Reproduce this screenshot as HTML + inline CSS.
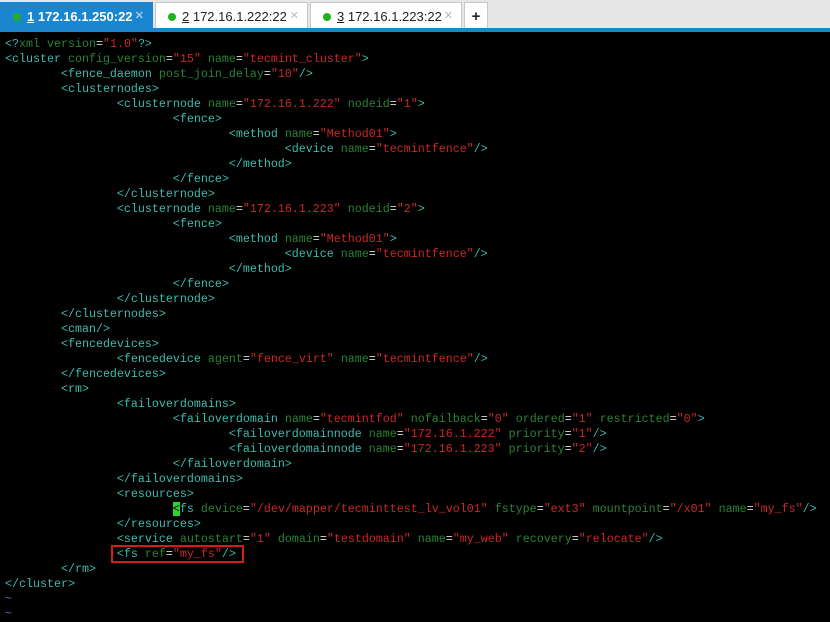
<!DOCTYPE html>
<html><head><style>
body{margin:0;width:830px;height:620px;overflow:hidden;background:#000;font-family:"Liberation Sans",sans-serif}
#bar{position:absolute;left:0;top:0;width:830px;height:28px;background:#e6e6e6}
#line{position:absolute;left:0;top:28px;width:830px;height:4px;background:#1a86d0}
.tab{position:absolute;top:2px;height:26px;background:#fff;border:1px solid #c8c8c8;border-bottom:none;box-sizing:border-box;font-size:13px;color:#222;line-height:27px}
.tab .d{display:inline-block;width:8px;height:8px;border-radius:50%;background:#1db31d;margin:0 6px 0 12px;vertical-align:0px}
.tab .x{position:absolute;right:8px;top:0;color:#bbb;font-size:11px}
pre{position:absolute;left:5px;top:37px;margin:0;font-family:"Liberation Mono",monospace;font-size:11.67px;line-height:15px;tab-size:8;-moz-tab-size:8;color:#ccc}
.t{color:#3cbcae}.a{color:#2a8236}.v{color:#c82828}.e{color:#ddd}.g{color:#5a6ab0}
.cur{background:#2bd42b;color:#000}
#box{position:absolute;left:111px;top:545px;width:133px;height:18px;border:2px solid #d21c1c;box-sizing:border-box}
</style></head><body>
<div id="bar"></div><div id="line"></div>
<div class="tab" style="left:0;width:153px;background:#1a86d0;border-color:#1a86d0;color:#fff;font-weight:bold"><span class="d"></span><u>1</u> 172.16.1.250:22<span class="x" style="color:#9cc8ea">✕</span></div>
<div class="tab" style="left:155px;width:153px"><span class="d"></span><u>2</u> 172.16.1.222:22<span class="x">✕</span></div>
<div class="tab" style="left:310px;width:152px"><span class="d"></span><u>3</u> 172.16.1.223:22<span class="x">✕</span></div>
<div class="tab" style="left:464px;width:24px;text-align:center;font-weight:bold;font-size:15px">+</div>
<pre><span class="t">&lt;?</span><span class="a">xml version</span><span class="e">=</span><span class="v">"1.0"</span><span class="t">?&gt;</span>
<span class="t">&lt;cluster</span> <span class="a">config_version</span><span class="e">=</span><span class="v">"15"</span> <span class="a">name</span><span class="e">=</span><span class="v">"tecmint_cluster"</span><span class="t">&gt;</span>
	<span class="t">&lt;fence_daemon</span> <span class="a">post_join_delay</span><span class="e">=</span><span class="v">"10"</span><span class="t">/&gt;</span>
	<span class="t">&lt;clusternodes&gt;</span>
		<span class="t">&lt;clusternode</span> <span class="a">name</span><span class="e">=</span><span class="v">"172.16.1.222"</span> <span class="a">nodeid</span><span class="e">=</span><span class="v">"1"</span><span class="t">&gt;</span>
			<span class="t">&lt;fence&gt;</span>
				<span class="t">&lt;method</span> <span class="a">name</span><span class="e">=</span><span class="v">"Method01"</span><span class="t">&gt;</span>
					<span class="t">&lt;device</span> <span class="a">name</span><span class="e">=</span><span class="v">"tecmintfence"</span><span class="t">/&gt;</span>
				<span class="t">&lt;/method&gt;</span>
			<span class="t">&lt;/fence&gt;</span>
		<span class="t">&lt;/clusternode&gt;</span>
		<span class="t">&lt;clusternode</span> <span class="a">name</span><span class="e">=</span><span class="v">"172.16.1.223"</span> <span class="a">nodeid</span><span class="e">=</span><span class="v">"2"</span><span class="t">&gt;</span>
			<span class="t">&lt;fence&gt;</span>
				<span class="t">&lt;method</span> <span class="a">name</span><span class="e">=</span><span class="v">"Method01"</span><span class="t">&gt;</span>
					<span class="t">&lt;device</span> <span class="a">name</span><span class="e">=</span><span class="v">"tecmintfence"</span><span class="t">/&gt;</span>
				<span class="t">&lt;/method&gt;</span>
			<span class="t">&lt;/fence&gt;</span>
		<span class="t">&lt;/clusternode&gt;</span>
	<span class="t">&lt;/clusternodes&gt;</span>
	<span class="t">&lt;cman/&gt;</span>
	<span class="t">&lt;fencedevices&gt;</span>
		<span class="t">&lt;fencedevice</span> <span class="a">agent</span><span class="e">=</span><span class="v">"fence_virt"</span> <span class="a">name</span><span class="e">=</span><span class="v">"tecmintfence"</span><span class="t">/&gt;</span>
	<span class="t">&lt;/fencedevices&gt;</span>
	<span class="t">&lt;rm&gt;</span>
		<span class="t">&lt;failoverdomains&gt;</span>
			<span class="t">&lt;failoverdomain</span> <span class="a">name</span><span class="e">=</span><span class="v">"tecmintfod"</span> <span class="a">nofailback</span><span class="e">=</span><span class="v">"0"</span> <span class="a">ordered</span><span class="e">=</span><span class="v">"1"</span> <span class="a">restricted</span><span class="e">=</span><span class="v">"0"</span><span class="t">&gt;</span>
				<span class="t">&lt;failoverdomainnode</span> <span class="a">name</span><span class="e">=</span><span class="v">"172.16.1.222"</span> <span class="a">priority</span><span class="e">=</span><span class="v">"1"</span><span class="t">/&gt;</span>
				<span class="t">&lt;failoverdomainnode</span> <span class="a">name</span><span class="e">=</span><span class="v">"172.16.1.223"</span> <span class="a">priority</span><span class="e">=</span><span class="v">"2"</span><span class="t">/&gt;</span>
			<span class="t">&lt;/failoverdomain&gt;</span>
		<span class="t">&lt;/failoverdomains&gt;</span>
		<span class="t">&lt;resources&gt;</span>
			<span class="cur">&lt;</span><span class="t">fs</span> <span class="a">device</span><span class="e">=</span><span class="v">"/dev/mapper/tecminttest_lv_vol01"</span> <span class="a">fstype</span><span class="e">=</span><span class="v">"ext3"</span> <span class="a">mountpoint</span><span class="e">=</span><span class="v">"/x01"</span> <span class="a">name</span><span class="e">=</span><span class="v">"my_fs"</span><span class="t">/&gt;</span>
		<span class="t">&lt;/resources&gt;</span>
		<span class="t">&lt;service</span> <span class="a">autostart</span><span class="e">=</span><span class="v">"1"</span> <span class="a">domain</span><span class="e">=</span><span class="v">"testdomain"</span> <span class="a">name</span><span class="e">=</span><span class="v">"my_web"</span> <span class="a">recovery</span><span class="e">=</span><span class="v">"relocate"</span><span class="t">/&gt;</span>
		<span class="t">&lt;fs</span> <span class="a">ref</span><span class="e">=</span><span class="v">"my_fs"</span><span class="t">/&gt;</span>
	<span class="t">&lt;/rm&gt;</span>
<span class="t">&lt;/cluster&gt;</span>
<span class="g">~</span>
<span class="g">~</span></pre>
<div id="box"></div>
</body></html>
